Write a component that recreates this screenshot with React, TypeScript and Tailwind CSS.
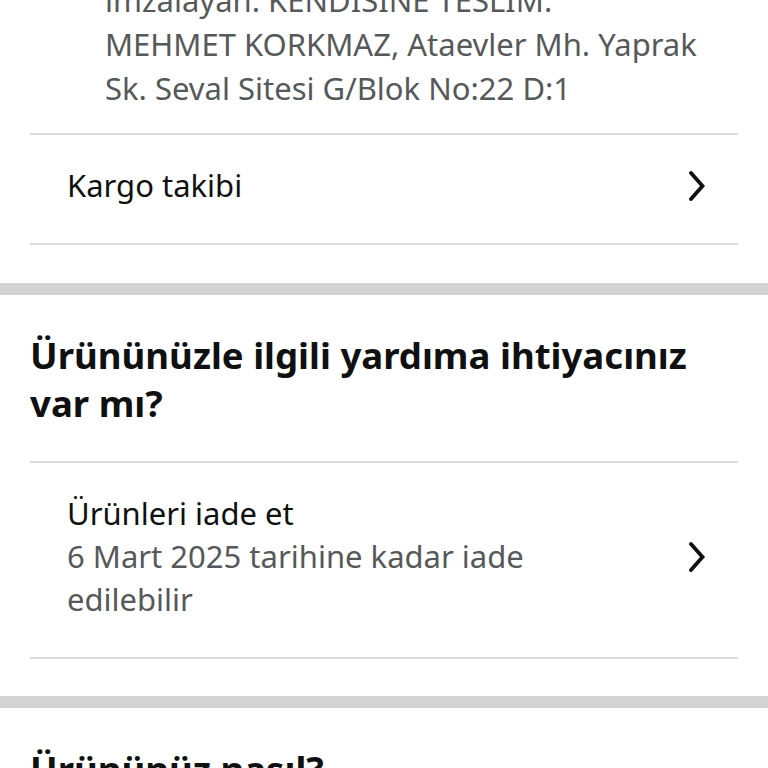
const font = { fontFamily: '"Noto Sans", "Open Sans", sans-serif' };

function Chevron() {
  return (
    <svg width="22" height="30" viewBox="0 0 22 30" className="shrink-0">
      <path
        d="M5 2 L16.5 15 L5 28"
        fill="none"
        stroke="#0f1111"
        strokeWidth="3.8"
        strokeLinecap="round"
        strokeLinejoin="miter"
      />
    </svg>
  );
}

function Row({ title, sub }: { title: string; sub?: string }) {
  return (
    <div className="flex items-center justify-between pl-[37px] pr-[30px] pt-[29px] pb-[36px] border-b-2 border-[#dcdcdc]">
      <div className="text-[31px] leading-[43px]">
        <div className="text-[#0f1111]">{title}</div>
        {sub && <div className="text-[#565959] max-w-[500px]">{sub}</div>}
      </div>
      <Chevron />
    </div>
  );
}

export default function App() {
  return (
    <div className="w-[768px] h-[768px] overflow-hidden bg-white" style={font}>
      <div className="-mt-[22px]">
        <div className="mx-[30px] border-b-2 border-[#dcdcdc]">
          <div className="pl-[75px] pb-[23px] text-[31px] leading-[44px] text-[#565959]">
            <div>imzalayan: KENDİSİNE TESLİM.</div>
            <div>MEHMET KORKMAZ, Ataevler Mh. Yaprak</div>
            <div>Sk. Seval Sitesi G/Blok No:22 D:1</div>
          </div>
        </div>
        <div className="mx-[30px]">
          <Row title="Kargo takibi" />
        </div>
        <div className="h-[38px]" />
        <div className="h-[12px] bg-[#d3d3d3]" />

        <div className="mx-[30px] pt-[36px]">
          <h2 className="font-bold text-[36.6px] leading-[48px] text-[#0f1111] pb-[34px] pr-[30px] border-b-2 border-[#dcdcdc]">
            Ürününüzle ilgili yardıma ihtiyacınız var mı?
          </h2>
          <Row
            title="Ürünleri iade et"
            sub="6 Mart 2025 tarihine kadar iade edilebilir"
          />
        </div>
        <div className="h-[37px]" />
        <div className="h-[12px] bg-[#d3d3d3]" />

        <div className="mx-[30px] pt-[37px]">
          <h2 className="font-bold text-[36.6px] leading-[48px] text-[#0f1111]">
            Ürününüz nasıl?
          </h2>
        </div>
      </div>
    </div>
  );
}
